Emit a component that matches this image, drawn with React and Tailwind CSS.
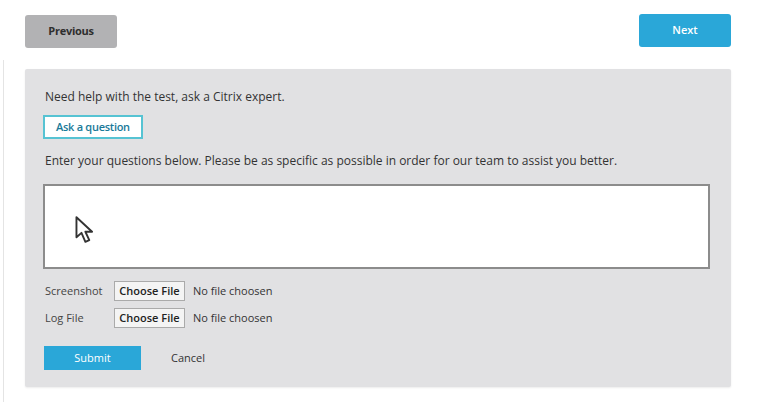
import React from "react";

// Cursor glyph drawn in the empty question box
function ArrowCursor() {
  return (
    <svg width="25" height="29" viewBox="0 0 22 26" className="ml-[29px] mt-[29px]">
      <path
        d="M2 2 L2 20 L6.5 16 L10 24 L13.5 22.5 L10 15 L16 15 Z"
        fill="#fff"
        stroke="#333"
        strokeWidth="1.7"
        strokeLinejoin="round"
      />
    </svg>
  );
}

function FileRow({ label }) {
  return (
    <div className="flex items-center h-[20px]">
      <span className="w-[69px] text-[11px] text-[#444]">{label}</span>
      <button className="h-[20px] w-[71px] border border-[#aaa] bg-[#f4f4f4] text-[11px] font-semibold text-[#222]">
        Choose File
      </button>
      <span className="ml-[8px] text-[11px] text-[#333]">No file choosen</span>
    </div>
  );
}

export default function App() {
  return (
    <div
      className="w-[774px] h-[402px] bg-white relative overflow-hidden"
      style={{ fontFamily: '"Open Sans", "Noto Sans", sans-serif' }}
    >
      <div className="absolute left-[3px] top-[60px] bottom-0 w-px bg-[#e4e4e4]" />
      <div className="pl-[25px] pr-[43px] pt-[14px]">
        <div className="flex justify-between">
          <button className="w-[92px] h-[33px] mt-[1px] rounded-[3px] bg-[#b2b2b4] text-[11px] font-bold text-[#2e2e2e] tracking-tight">
            Previous
          </button>
          <button className="w-[92px] h-[33px] rounded-[3px] bg-[#2aa7d8] text-[11px] font-semibold text-white">
            Next
          </button>
        </div>

        <div className="mt-[21px] h-[318px] bg-[#e1e1e3] rounded-[2px] shadow-[0_1px_2px_rgba(0,0,0,0.08)] pl-[18px] pr-[21px] pt-[19px]">
          <p className="pl-[2px] text-[12px] text-[#333] leading-[18px]">
            Need help with the test, ask a Citrix expert.
          </p>
          <button className="mt-[9px] h-[24px] px-[11px] bg-white border-2 border-[#56c3d3] text-[11px] font-semibold text-[#197a99] tracking-tight">
            Ask a question
          </button>
          <p className="pl-[2px] mt-[13px] text-[12px] text-[#333] leading-[18px]">
            Enter your questions below. Please be as specific as possible in order for our team to assist you better.
          </p>
          <div className="mt-[14px] h-[85px] bg-white border-2 border-[#8c8c8c]">
            <ArrowCursor />
          </div>
          <div className="mt-[12px] flex flex-col gap-[7px] pl-[2px]">
            <FileRow label="Screenshot" />
            <FileRow label="Log File" />
          </div>
          <div className="mt-[18px] flex items-center pl-[1px]">
            <button className="w-[97px] h-[24px] bg-[#2aa7d8] text-[11px] text-white">Submit</button>
            <span className="ml-[30px] text-[11px] text-[#333]">Cancel</span>
          </div>
        </div>
      </div>
    </div>
  );
}
